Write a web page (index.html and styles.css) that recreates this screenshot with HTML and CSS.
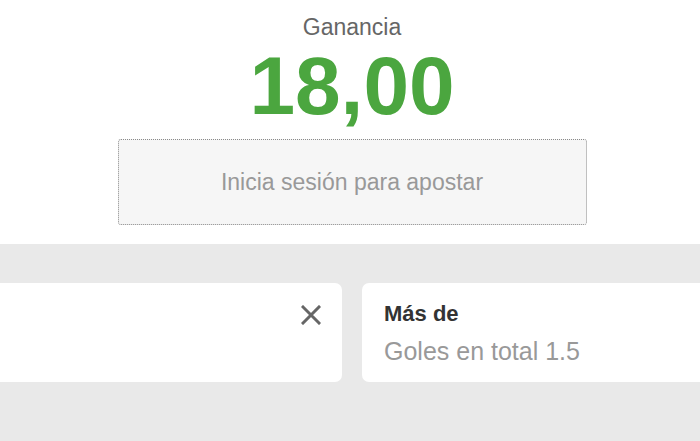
FILE: index.html
```html
<!DOCTYPE html>
<html lang="es">
<head>
  <meta charset="UTF-8">
  <meta name="viewport" content="width=device-width, initial-scale=1.0">
  <title>Boleto de apuesta</title>
  <link rel="stylesheet" href="styles.css">
</head>
<body>
  <div class="summary">
    <div class="label">Ganancia</div>
    <div class="amount">18,00</div>
    <button class="login-btn" type="button">Inicia sesión para apostar</button>
  </div>

  <div class="selections">
    <div class="track">
      <div class="bet-card">
        <div class="bet-info"></div>
        <button class="remove" type="button" aria-label="Quitar">
          <svg width="20" height="20" viewBox="0 0 20 20">
            <path d="M2 2 L18 18 M18 2 L2 18" stroke="#666" stroke-width="3" stroke-linecap="square" fill="none"/>
          </svg>
        </button>
      </div>
      <div class="bet-card">
        <div class="bet-info">
          <div class="bet-title">Más de</div>
          <div class="bet-market">Goles en total 1.5</div>
        </div>
      </div>
    </div>
  </div>
</body>
</html>
```

FILE: styles.css
```css
/* General */
body {
  font-family: 'Liberation Sans', Arial, sans-serif;
  margin: 0;
  background: #fff;
  overflow: hidden;
}

/* Summary */
.summary {
  display: flex;
  flex-direction: column;
  align-items: center;
  padding: 14px 0 0 4px;
  height: 228px;
  box-sizing: border-box;
}

.label {
  color: #666;
  font-size: 23px;
  line-height: 26px;
}

.amount {
  color: #4ba63f;
  font-size: 82px;
  font-weight: bold;
  line-height: 92px;
}

.login-btn {
  margin-top: 7px;
  width: 469px;
  height: 86px;
  background: #f6f6f6;
  border: 1px dotted #8a8a8a;
  border-radius: 3px;
  color: #999;
  font-family: inherit;
  font-size: 23px;
}

/* Selections */
.selections {
  background: #e9e9e9;
  margin-top: 16px;
  padding: 39px 0 80px;
}

.track {
  display: flex;
  gap: 20px;
  margin-left: -18px;
}

.bet-card {
  flex: 0 0 360px;
  height: 99px;
  background: #fff;
  border-radius: 7px;
  display: flex;
  justify-content: space-between;
  align-items: flex-start;
  padding: 20px 22px;
  box-sizing: border-box;
}

.bet-title {
  color: #333;
  font-size: 22px;
  font-weight: bold;
  line-height: 22px;
}

.bet-market {
  color: #999;
  font-size: 25px;
  line-height: 28px;
  margin-top: 12px;
}

.remove {
  background: none;
  border: none;
  padding: 0;
  margin-top: 2px;
  margin-right: -1px;
  cursor: pointer;
}
```
